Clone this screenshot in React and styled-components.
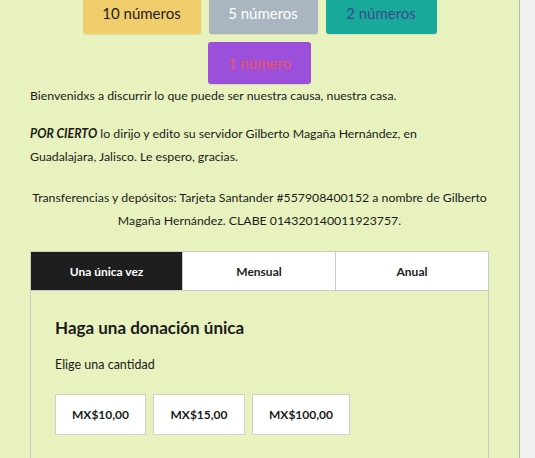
import React, { useState } from 'react';
import styled, { createGlobalStyle } from 'styled-components';

const GlobalStyle = createGlobalStyle`
  html, body {
    margin: 0;
    padding: 0;
    background: #f1f1f1;
  }
  body {
    font-family: Lato, "Open Sans", sans-serif;
    color: #1b1b1b;
  }
`;

const frequencies = ['Una única vez', 'Mensual', 'Anual'];
const amounts = [
  { label: 'MX$10,00', w: 91 },
  { label: 'MX$15,00', w: 92 },
  { label: 'MX$100,00', w: 98 },
];

const App = () => {
  const [active, setActive] = useState(0);
  return (
    <Page>
      <GlobalStyle />
      <Buttons>
        <Pill $w={118} $bg="#f0cd6a" $fg="#1d1d1d">10 números</Pill>
        <Pill $w={109} $bg="#a9b6c0" $fg="#ffffff">5 números</Pill>
        <Pill $w={111} $bg="#19a99b" $fg="#3b4b8c">2 números</Pill>
        <Pill $w={103} $bg="#9c4fdb" $fg="#ea5560">1 número</Pill>
      </Buttons>

      <Text>Bienvenidxs a discurrir lo que puede ser nuestra causa, nuestra casa.</Text>
      <Text>
        <strong><em>POR CIERTO</em></strong> lo dirijo y edito su servidor Gilberto Magaña Hernández, en
        <br />
        Guadalajara, Jalisco. Le espero, gracias.
      </Text>
      <Text $center>
        Transferencias y depósitos: Tarjeta Santander #557908400152 a nombre de Gilberto
        <br />
        Magaña Hernández. CLABE 014320140011923757.
      </Text>

      <Donation>
        <Tabs>
          {frequencies.map((f, i) => (
            <Tab key={f} $active={active === i} onClick={() => setActive(i)}>{f}</Tab>
          ))}
        </Tabs>
        <Panel>
          <Heading>Haga una donación única</Heading>
          <Label>Elige una cantidad</Label>
          <Amounts>
            {amounts.map((a) => (
              <Amount key={a.label} $w={a.w}>{a.label}</Amount>
            ))}
          </Amounts>
        </Panel>
      </Donation>
    </Page>
  );
};

export default App;

const Page = styled.div`
  width: 459px;
  min-height: 458px;
  padding: 0 30px;
  background: #e8f2be;
  border-right: 1px solid #b9bca6;
  box-sizing: content-box;
  overflow: hidden;
`;

const Buttons = styled.div`
  width: 362px;
  margin: -8px auto 0;
  display: flex;
  flex-wrap: wrap;
  justify-content: center;
  gap: 8px;
`;

const Pill = styled.div`
  width: ${(p) => p.$w}px;
  height: 42px;
  display: flex;
  align-items: center;
  justify-content: center;
  border-radius: 3px;
  background: ${(p) => p.$bg};
  color: ${(p) => p.$fg};
  font-size: 15px;
  box-shadow: 0 1px 1px rgba(0, 0, 0, 0.08);
`;

const Text = styled.p`
  margin: ${(p) => (p.$center ? '18px' : '15px')} 0 0;
  font-size: 12.3px;
  line-height: 23px;
  white-space: nowrap;
  text-align: ${(p) => (p.$center ? 'center' : 'left')};
  &:first-of-type {
    margin-top: 0;
  }
  strong {
    font-weight: 700;
  }
`;

const Donation = styled.div`
  margin-top: 19px;
  border: 1px solid #c9ccc0;
  border-bottom: none;
`;

const Tabs = styled.div`
  display: grid;
  grid-template-columns: 151px 153px 1fr;
  background: #ffffff;
  border-bottom: 1px solid #c9ccc0;
`;

const Tab = styled.div`
  height: 38px;
  display: flex;
  align-items: center;
  justify-content: center;
  font-size: 12px;
  font-weight: 700;
  cursor: pointer;
  background: ${(p) => (p.$active ? '#1e1e1e' : '#ffffff')};
  color: ${(p) => (p.$active ? '#ffffff' : '#222222')};
  & + & {
    border-left: 1px solid #c9ccc0;
  }
`;

const Panel = styled.div`
  padding: 26px 24px 30px;
`;

const Heading = styled.h2`
  margin: 0 0 16px;
  font-size: 17px;
  font-weight: 700;
  line-height: 22px;
`;

const Label = styled.div`
  font-size: 12.5px;
  line-height: 20px;
  margin-bottom: 19px;
`;

const Amounts = styled.div`
  display: flex;
  gap: 7px;
`;

const Amount = styled.div`
  width: ${(p) => p.$w}px;
  height: 41px;
  box-sizing: border-box;
  display: flex;
  align-items: center;
  justify-content: center;
  background: #ffffff;
  border: 1px solid #cfd2c4;
  font-size: 12px;
  font-weight: 700;
`;
